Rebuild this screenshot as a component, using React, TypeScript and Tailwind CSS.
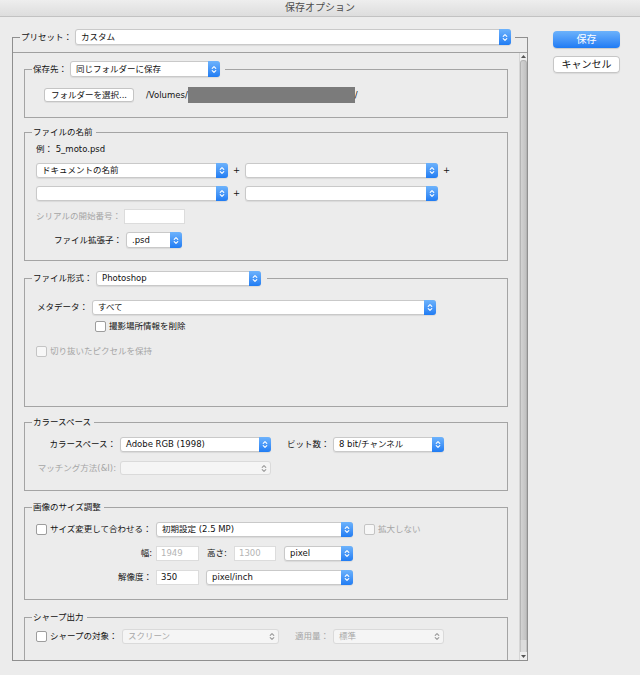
import React from 'react';

function Chevrons({ color }: { color: string }) {
  return (
    <svg width="6" height="9" viewBox="0 0 6 9" fill="none" stroke={color} strokeWidth="1.1" strokeLinecap="round" strokeLinejoin="round">
      <path d="M1.2 3.4 3 1.6 4.8 3.4" />
      <path d="M1.2 5.6 3 7.4 4.8 5.6" />
    </svg>
  );
}

function Popup({ value = '', className = '' }: { value?: string; className?: string }) {
  return (
    <div className={`flex shrink-0 overflow-hidden rounded-[3px] bg-white shadow-[inset_0_0_0_1px_#c9c9c9,0_1px_1px_rgba(0,0,0,0.08)] ${className}`}>
      <span className="flex flex-1 items-center overflow-hidden whitespace-nowrap pl-[6px]">{value}</span>
      <span className="flex w-[12px] items-center justify-center bg-linear-to-b from-[#6db3fc] to-[#1f7cf3]">
        <Chevrons color="#ffffff" />
      </span>
    </div>
  );
}

function DisabledPopup({ value = '', className = '' }: { value?: string; className?: string }) {
  return (
    <div className={`flex shrink-0 items-center rounded-[3px] bg-[#f5f5f5] pl-[6px] pr-[4px] text-[#a9a9a9] shadow-[inset_0_0_0_1px_#dadada] ${className}`}>
      <span className="flex-1 whitespace-nowrap">{value}</span>
      <Chevrons color="#9a9a9a" />
    </div>
  );
}

function Input({ value = '', className = '' }: { value?: string; className?: string }) {
  return (
    <div className={`flex h-[15px] shrink-0 items-center bg-white pl-[5px] shadow-[inset_0_0_0_1px_#dcdcdc] ${className}`}>{value}</div>
  );
}

function Checkbox({ disabled, className = '' }: { disabled?: boolean; className?: string }) {
  return (
    <span
      className={`h-[11px] w-[11px] shrink-0 rounded-[2px] border ${disabled ? 'border-[#c4c4c4] bg-[#f7f7f7]' : 'border-[#9d9d9d] bg-white'} ${className}`}
    />
  );
}

function Group({
  tall,
  legend,
  bodyClass = '',
  className = '',
  children,
}: {
  tall?: boolean;
  legend: React.ReactNode;
  bodyClass?: string;
  className?: string;
  children?: React.ReactNode;
}) {
  return (
    <div className={`shrink-0 ${className}`}>
      <div className={`flex items-center ${tall ? 'h-[16px]' : 'h-[14px]'}`}>
        <div className={`w-[8px] self-stretch border-l border-t border-[#a4a4a4] ${tall ? 'mt-[8px]' : 'mt-[7px]'}`} />
        {legend}
        <div className={`flex-1 self-stretch border-r border-t border-[#a4a4a4] ${tall ? 'mt-[8px]' : 'mt-[7px]'}`} />
      </div>
      <div className={`flex flex-col border-x border-b border-[#a4a4a4] ${bodyClass}`}>{children}</div>
    </div>
  );
}

export default function App() {
  return (
    <div className="h-[675px] w-[640px] overflow-hidden bg-[#ececec] font-['DejaVu_Sans','Noto_Sans_CJK_JP',sans-serif] text-[8.5px] text-[#111111]">
      <div className="h-[17px] border-b border-[#c2c2c2] bg-linear-to-b from-[#eeeeee] to-[#dddddd] text-center text-[10px] leading-[16px] text-[#4d4d4d]">
        保存オプション
      </div>

      <div className="flex pl-[12px] pt-[12px]">
        {/* preset frame */}
        <div className="flex w-[516px] flex-col">
          <div className="flex h-[16px] items-center">
            <div className="mt-[8px] w-[8px] self-stretch border-l border-t border-[#8f8f8f]" />
            <span className="w-[55px] whitespace-nowrap pl-[1px]">プリセット：</span>
            <Popup className="h-[16px] w-[436px]" value="カスタム" />
            <div className="ml-[4px] mt-[8px] flex-1 self-stretch border-r border-t border-[#8f8f8f]" />
          </div>
          <div className="h-[616px] border-x border-b border-[#8f8f8f] pt-[7px]">
            <div className="flex h-[608px] border-t border-[#a0a0a0]">
              <div className="flex flex-1 flex-col overflow-hidden px-[11px] pt-[8px]">
                <Group
                  tall
                  legend={
                    <>
                      <span className="w-[38px] whitespace-nowrap pl-[1px]">保存先：</span>
                      <Popup className="h-[16px] w-[150px]" value="同じフォルダーに保存" />
                      <span className="w-[5px]" />
                    </>
                  }
                  bodyClass="h-[41px]"
                >
                  <div className="mt-[10px] flex h-[16px] items-center pl-[19px]">
                    <div className="flex h-[14px] w-[90px] items-center justify-center whitespace-nowrap rounded-[3px] bg-white shadow-[inset_0_0_0_1px_#c4c4c4,0_1px_0_rgba(0,0,0,0.06)]">
                      フォルダーを選択...
                    </div>
                    <span className="ml-[12px]">/Volumes/</span>
                    <span className="h-[16px] w-[167px] bg-[#7b7b7b]" />
                    <span>/</span>
                  </div>
                </Group>

                <Group
                  className="mt-[7px]"
                  legend={<span className="whitespace-nowrap pl-[1px] pr-[3px]">ファイルの名前</span>}
                  bodyClass="h-[122px] pl-[11px]"
                >
                  <div className="mt-[3px] flex h-[14px] items-center whitespace-nowrap">例： 5_moto.psd</div>
                  <div className="mt-[7px] flex items-center">
                    <Popup className="h-[15px] w-[192px]" value="ドキュメントの名前" />
                    <span className="w-[17px] text-center">+</span>
                    <Popup className="h-[15px] w-[193px]" />
                    <span className="w-[17px] text-center">+</span>
                  </div>
                  <div className="mt-[8px] flex items-center">
                    <Popup className="h-[15px] w-[192px]" />
                    <span className="w-[17px] text-center">+</span>
                    <Popup className="h-[15px] w-[193px]" />
                  </div>
                  <div className="mt-[8px] flex items-center">
                    <span className="w-[88px] whitespace-nowrap text-[#a5a5a5]">シリアルの開始番号：</span>
                    <Input className="w-[61px]" />
                  </div>
                  <div className="mt-[8px] flex items-center">
                    <span className="w-[90px] whitespace-nowrap pr-[4px] text-right">ファイル拡張子：</span>
                    <Popup className="h-[16px] w-[56px]" value=".psd" />
                  </div>
                </Group>

                <Group
                  tall
                  className="mt-[9px]"
                  legend={
                    <>
                      <span className="w-[64px] whitespace-nowrap pl-[1px]">ファイル形式：</span>
                      <Popup className="h-[15px] w-[165px]" value="Photoshop" />
                      <span className="w-[6px]" />
                    </>
                  }
                  bodyClass="h-[121px] pl-[11px]"
                >
                  <div className="mt-[14px] flex items-center">
                    <span className="w-[56px] whitespace-nowrap pl-[1px]">メタデータ：</span>
                    <Popup className="h-[15px] w-[344px]" value="すべて" />
                  </div>
                  <div className="mt-[6px] flex h-[11px] items-center pl-[59px]">
                    <Checkbox />
                    <span className="ml-[3px] whitespace-nowrap">撮影場所情報を削除</span>
                  </div>
                  <div className="mt-[14px] flex h-[11px] items-center">
                    <Checkbox disabled />
                    <span className="ml-[3px] whitespace-nowrap text-[#a5a5a5]">切り抜いたピクセルを保持</span>
                  </div>
                </Group>

                <Group
                  className="mt-[8px]"
                  legend={<span className="whitespace-nowrap pl-[1px] pr-[3px]">カラースペース</span>}
                  bodyClass="h-[62px] pl-[11px]"
                >
                  <div className="mt-[8px] flex items-center">
                    <span className="w-[84px] whitespace-nowrap pr-[4px] text-right">カラースペース：</span>
                    <Popup className="h-[15px] w-[151px]" value="Adobe RGB (1998)" />
                    <span className="ml-[16px] w-[46px] whitespace-nowrap">ビット数：</span>
                    <Popup className="h-[15px] w-[111px]" value="8 bit/チャンネル" />
                  </div>
                  <div className="mt-[9px] flex items-center">
                    <span className="w-[84px] whitespace-nowrap pr-[4px] text-right text-[#a5a5a5]">マッチング方法(&amp;I):</span>
                    <DisabledPopup className="h-[14px] w-[151px]" />
                  </div>
                </Group>

                <Group
                  className="mt-[9px]"
                  legend={<span className="whitespace-nowrap pl-[1px] pr-[3px]">画像のサイズ調整</span>}
                  bodyClass="h-[86px] pl-[11px]"
                >
                  <div className="mt-[8px] flex items-center">
                    <Checkbox />
                    <span className="ml-[3px] w-[106px] whitespace-nowrap">サイズ変更して合わせる：</span>
                    <Popup className="h-[15px] w-[197px]" value="初期設定 (2.5 MP)" />
                    <Checkbox disabled className="ml-[11px]" />
                    <span className="ml-[3px] whitespace-nowrap text-[#a5a5a5]">拡大しない</span>
                  </div>
                  <div className="mt-[9px] flex items-center">
                    <span className="w-[120px] whitespace-nowrap pr-[4px] text-right">幅:</span>
                    <Input className="w-[43px] text-[#b4b4b4]" value="1949" />
                    <span className="ml-[8px] w-[27px] whitespace-nowrap">高さ:</span>
                    <Input className="w-[42px] text-[#b4b4b4]" value="1300" />
                    <Popup className="ml-[8px] h-[15px] w-[69px]" value="pixel" />
                  </div>
                  <div className="mt-[9px] flex items-center">
                    <span className="w-[120px] whitespace-nowrap pr-[4px] text-right">解像度：</span>
                    <Input className="w-[43px]" value="350" />
                    <Popup className="ml-[7px] h-[15px] w-[147px]" value="pixel/inch" />
                  </div>
                </Group>

                <Group
                  className="mt-[10px]"
                  legend={<span className="whitespace-nowrap pl-[1px] pr-[3px]">シャープ出力</span>}
                  bodyClass="h-[60px] pl-[11px]"
                >
                  <div className="mt-[5px] flex items-center">
                    <Checkbox />
                    <span className="ml-[3px] w-[72px] whitespace-nowrap">シャープの対象：</span>
                    <DisabledPopup className="h-[15px] w-[157px]" value="スクリーン" />
                    <span className="ml-[16px] w-[38px] whitespace-nowrap text-[#a5a5a5]">適用量：</span>
                    <DisabledPopup className="h-[15px] w-[111px]" value="標準" />
                  </div>
                </Group>
              </div>

              {/* scrollbar */}
              <div className="flex w-[8px] flex-col border-l border-[#d6d6d6] bg-[#efefef]">
                <div className="flex h-[6px] items-center justify-center">
                  <svg width="5" height="3" viewBox="0 0 5 3">
                    <path d="M0 3 2.5 0 5 3Z" fill="#555" />
                  </svg>
                </div>
                <div className="mt-[1px] flex-1 rounded-t-[3px] border-x border-t border-[#b4b4b4] bg-linear-to-r from-[#d2d2d2] to-[#c2c2c2]" />
                <div className="h-[12px] border-x border-[#c4c4c4] bg-[#dcdcdc]" />
                <div className="mt-[1px] flex h-[7px] items-center justify-center">
                  <svg width="5" height="3" viewBox="0 0 5 3">
                    <path d="M0 0 2.5 3 5 0Z" fill="#555" />
                  </svg>
                </div>
              </div>
            </div>
          </div>
        </div>

        {/* buttons */}
        <div className="ml-[25px] mt-[2px] flex w-[67px] flex-col gap-[8px] text-[10px]">
          <div className="flex h-[17px] items-center justify-center rounded-[4px] bg-linear-to-b from-[#6cb2fb] to-[#1d7af4] text-white shadow-[0_1px_1px_rgba(0,0,0,0.15)]">
            保存
          </div>
          <div className="flex h-[17px] items-center justify-center rounded-[4px] bg-white shadow-[inset_0_0_0_1px_#c6c6c6,0_1px_1px_rgba(0,0,0,0.08)]">
            キャンセル
          </div>
        </div>
      </div>
    </div>
  );
}
